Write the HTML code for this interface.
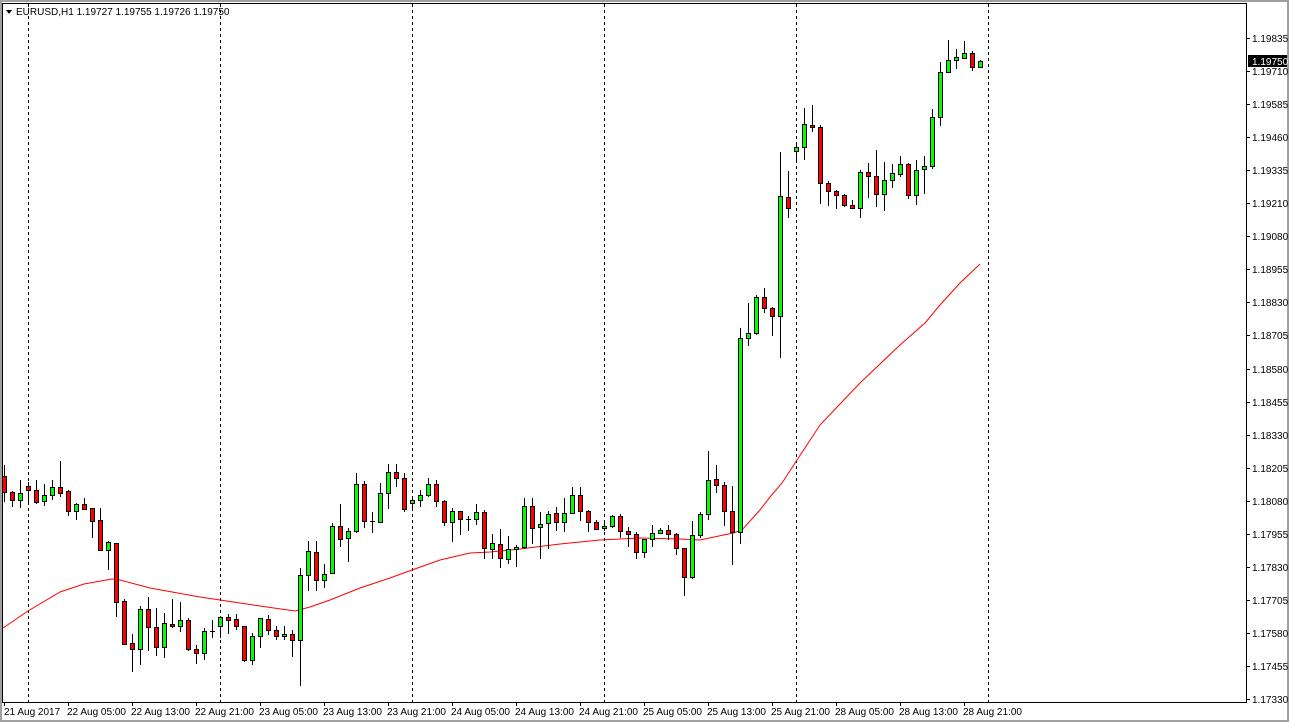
<!DOCTYPE html>
<html><head><meta charset="utf-8">
<style>
html,body{margin:0;padding:0;background:#fff;}
body{width:1289px;height:722px;overflow:hidden;position:relative;font-family:"Liberation Sans",sans-serif;}
svg{position:absolute;left:0;top:0;}
text{font-family:"Liberation Sans",sans-serif;font-size:10px;fill:#000;}
</style></head><body>
<svg id="s" width="1289" height="722" xmlns="http://www.w3.org/2000/svg" shape-rendering="crispEdges">
<rect x="0" y="0" width="1289" height="722" fill="#fff"/>
<rect x="0" y="0" width="1289" height="2" fill="#a0a0a0"/>
<rect x="0" y="0" width="2" height="722" fill="#a0a0a0"/>
<rect x="1287" y="0" width="2" height="722" fill="#a0a0a0"/>
<rect x="0" y="720" width="1289" height="2" fill="#a0a0a0"/>
<rect x="2" y="3" width="1245" height="1" fill="#000"/>
<rect x="2" y="3" width="1" height="700" fill="#000"/>
<rect x="1246" y="3" width="1" height="700" fill="#000"/>
<rect x="2" y="702" width="1245" height="1" fill="#000"/>
<g id="grid"></g>
<polyline id="ma" fill="none" stroke="#ff0000" stroke-width="1" shape-rendering="auto"
points="3,628 28,611 60,592 84,584 112,579 120,580 150,588 200,597 240,603 260,606 295,611 310,607 330,600 360,588 390,578 412,570 440,560 470,553 490,552 520,549 560,544 600,540 640,538 680,539 700,540 733,533 742,530 760,510 770,497 782,483 797,460 820,425 840,404 860,383 900,345 925,323 940,305 960,283 980,264"/>
<g id="c"></g>
<polygon points="6,10 12,10 9,14" fill="#000"/>
<text x="16" y="15">EURUSD,H1  1.19727 1.19755 1.19726 1.19750</text>
<g id="ax"></g>
<rect x="1248" y="55" width="39" height="12" fill="#000"/>
<text x="1252" y="65" style="fill:#fff">1.19750</text>
</svg>
<script>
var ns="http://www.w3.org/2000/svg",s=document.getElementById('s');
function R(g,x,y,w,h,f){var r=document.createElementNS(ns,'rect');r.setAttribute('x',x);r.setAttribute('y',y);r.setAttribute('width',w);r.setAttribute('height',h);r.setAttribute('fill',f);g.appendChild(r);}
function T(g,x,y,t){var e=document.createElementNS(ns,'text');e.setAttribute('x',x);e.setAttribute('y',y);e.textContent=t;g.appendChild(e);}
var grid=document.getElementById('grid');
[28,220,412,604,796,988].forEach(function(x){for(var y=4;y<702;y+=6)R(grid,x,y,1,3,'#000');});
var d=[
"R476,492,465,501","R492,500,491,506","G493,500,480,507","R486,490,482,504","R490,502,480,503","G495,501,484,505","G487,495,480,499","R487,493,461,496","R491,511,490,515","G504,511,503,519",
"R504,509,498,509","R508,521,508,537","R520,550,508,550","G542,550,541,569","R543,602,543,616","R601,644,599,644","R643,649,634,671","G609,649,606,664","R609,627,597,650","R627,647,608,655",
"G623,647,613,657","R624,626,599,627","G620,626,602,631","R620,649,618,650","R649,653,645,663","G631,653,628,659","D631,631,620,637","G617,626,616,637","R617,620,614,633","R619,626,614,629",
"R626,660,626,661","G636,660,633,664","G618,636,618,647","R619,630,615,634","R630,636,626,639","G634,636,626,639","R634,640,630,656","G575,640,568,685","G551,575,541,590","R552,580,541,590",
"G574,580,564,587","G526,573,523,573","R526,539,504,546","G531,538,528,561","G484,531,473,532","R484,521,481,527","D521,521,512,532","G493,522,483,522","G472,493,464,508","R472,478,464,486",
"R478,509,473,511","G500,503,497,510","G495,500,490,506","G484,495,478,496","R484,501,480,506","R501,522,500,525","G511,522,508,541","R511,519,511,534","D519,519,516,530","G512,519,504,524",
"R512,548,510,558","G543,549,534,558","R544,558,529,567","G549,559,536,563","G547,549,545,566","G506,547,498,548","R506,528,498,543","G524,527,512,558","G514,523,511,548","R513,522,507,530",
"G513,522,498,531","G495,513,487,513","R495,511,487,520","R511,522,510,531","R522,529,520,529","G526,528,521,530","G516,526,515,527","R516,531,514,537","R531,534,527,546","R534,552,532,558",
"G539,552,539,557","G533,539,525,546","G530,533,528,533","R530,534,525,539","R534,548,533,554","R548,577,548,595","G535,577,521,578","G514,535,512,537","G480,514,451,519","R479,485,465,492",
"R485,511,482,525","R511,532,486,564","G338,532,328,543","G333,338,303,345","G297,333,295,334","R297,308,288,312","R308,316,307,335","G196,316,152,357","R197,208,171,217","G147,151,145,159",
"G124,147,108,159","R125,127,105,131","R127,183,125,203","R183,191,181,205","R191,195,190,208","R195,205,194,206","R205,208,200,208","G172,208,170,217","R172,176,163,197","R176,194,150,206",
"G180,194,162,210","G173,180,164,187","G164,174,156,176","R164,195,163,198","G170,195,160,204","G166,169,156,193","G117,166,109,168","G72,117,62,125","G60,72,40,72","G57,60,49,68",
"G53,58,41,58","R53,67,51,70","G61,67,60,67"];
var g=document.getElementById('c');
d.forEach(function(c,i){var t=c[0],v=c.slice(1).split(',').map(Number),x=4+8*i;
 R(g,x,v[2],1,v[3]-v[2]+1,'#000');
 if(t=='D'){R(g,x-2,v[0],5,1,'#000');return;}
 var h=Math.max(v[1]-v[0]+1,3);R(g,x-2,v[0],5,h,'#000');
 if(h>2)R(g,x-1,v[0]+1,3,h-2,t=='G'?'#00ff00':'#ff0000');});
var ax=document.getElementById('ax');
var p=["1.19835","1.19710","1.19585","1.19460","1.19335","1.19210","1.19080","1.18955","1.18830","1.18705","1.18580","1.18455","1.18330","1.18205","1.18080","1.17955","1.17830","1.17705","1.17580","1.17455","1.17330"];
p.forEach(function(l,i){var y=Math.round(38+i*33.05);R(ax,1247,y,3,1,'#000');if(i!=1)T(ax,1252,y+4,l);else T(ax,1252,y+4,l);});
var tl=["21 Aug 2017","22 Aug 05:00","22 Aug 13:00","22 Aug 21:00","23 Aug 05:00","23 Aug 13:00","23 Aug 21:00","24 Aug 05:00","24 Aug 13:00","24 Aug 21:00","25 Aug 05:00","25 Aug 13:00","25 Aug 21:00","28 Aug 05:00","28 Aug 13:00","28 Aug 21:00"];
tl.forEach(function(l,i){var x=4+64*i;R(ax,x,703,1,3,'#000');T(ax,x+(i?-1:0),715,l);});
</script>
</body></html>
